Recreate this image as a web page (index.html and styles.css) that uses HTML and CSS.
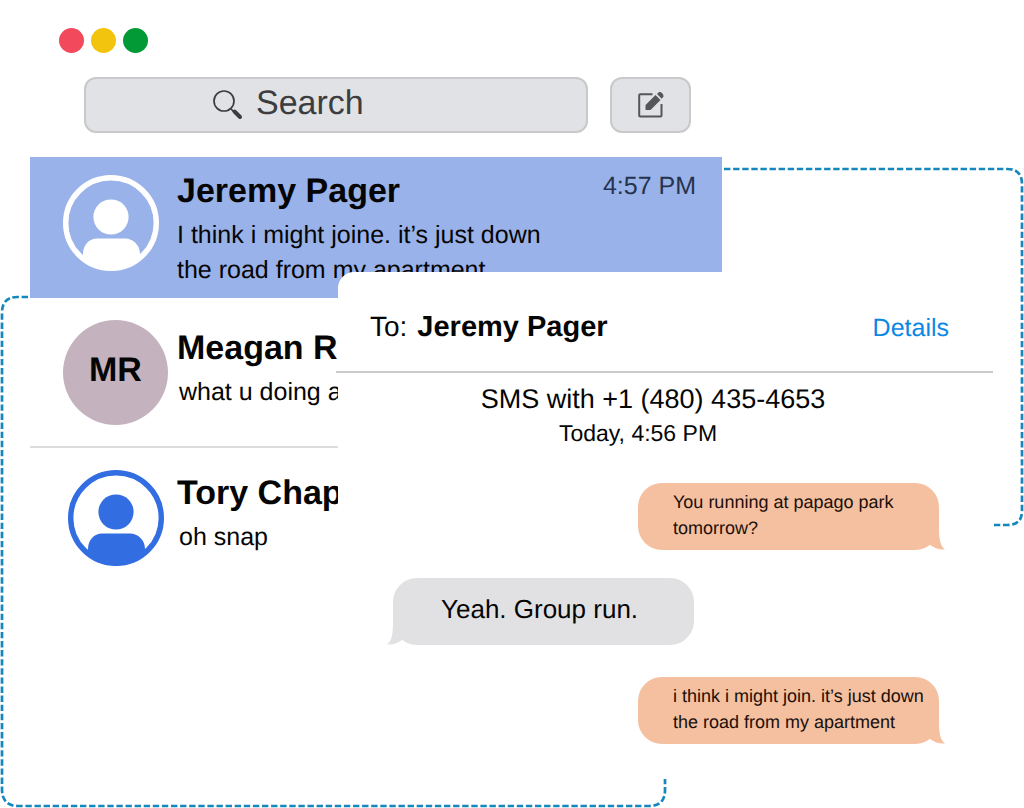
FILE: index.html
```html
<!DOCTYPE html>
<html lang="en">
<head>
<meta charset="utf-8">
<title>Messages</title>
<meta name="viewport" content="width=device-width, initial-scale=1">
<link rel="stylesheet" href="styles.css">
</head>
<body>
<svg class="symbols" aria-hidden="true">
  <symbol id="person" viewBox="0 0 96 96">
    <circle cx="48" cy="48" r="45.3" fill="none" stroke="currentColor" stroke-width="5.4"/>
    <circle cx="48" cy="42" r="17.6" fill="currentColor"/>
    <path fill="currentColor" d="M20 84V79C20 70 26 63.500 34 63.500H62C70 63.500 77 70 77 79V84C69 91 59 95.500 48 95.500S27 91 20 84Z"/>
  </symbol>
  <symbol id="tail" viewBox="0 0 22 34">
    <path fill="currentColor" d="M0 0H16V12C16 22 17 30 22 33.500C16 34 11 32 7 29L0 20Z"/>
  </symbol>
</svg>
<main class="scene">
  <svg class="frame frame-right" width="301" height="361" aria-hidden="true">
    <path d="M1 2H284Q299 2 299 17V344Q299 358 284 358H271"/>
  </svg>
  <svg class="frame frame-left" width="668" height="513" aria-hidden="true">
    <path d="M28 2H17Q2 2 2 18V494Q2 511 18 511H649Q665 511 665 495V484"/>
  </svg>

  <section class="inbox" aria-label="Conversations">
    <div class="dots"><span class="dot red"></span><span class="dot yellow"></span><span class="dot green"></span></div>
    <div class="toolbar">
      <label class="search">
        <svg width="32" height="32" viewBox="0 0 32 32" aria-hidden="true">
          <circle cx="12" cy="12" r="10" fill="none" stroke="currentColor" stroke-width="1.700"/>
          <path d="M19 20L22 23" stroke="currentColor" stroke-width="1.700"/>
          <path d="M22.500 22.500L28 28" stroke="currentColor" stroke-width="4" stroke-linecap="round"/>
        </svg>
        <input type="search" placeholder="Search" aria-label="Search">
      </label>
      <button class="compose" type="button" aria-label="New message">
        <svg width="28" height="28" viewBox="0 0 28 28" aria-hidden="true">
          <path d="M15.500 3.200H3.200Q2.200 3.200 2.200 4.200V24.500Q2.200 25.500 3.200 25.500H23.500Q24.500 25.500 24.500 24.500V13" fill="none" stroke="currentColor" stroke-width="2"/>
          <path fill="currentColor" d="M8.500 14L18.500 4L23.500 9L13.500 19H8.500ZM20 3L21.500 1.500C23.500 -0.500 28 4 26 6.300L24.700 7.700Z"/>
        </svg>
      </button>
    </div>
    <ul class="threads">
      <li class="thread selected">
        <svg class="avatar" width="96" height="96" aria-hidden="true"><use href="#person"/></svg>
        <div class="text"><h2>Jeremy Pager</h2><p>I think i might joine. it’s just down<br>the road from my apartment</p></div>
        <time>4:57 PM</time>
      </li>
      <li class="thread second">
        <span class="initials">MR</span>
        <div class="text"><h2>Meagan R</h2><p>what u doing a</p></div>
      </li>
      <li class="thread third">
        <svg class="avatar" width="96" height="96" aria-hidden="true"><use href="#person"/></svg>
        <div class="text"><h2>Tory Chap</h2><p>oh snap</p></div>
      </li>
    </ul>
  </section>

  <section class="chat" aria-label="Conversation with Jeremy Pager">
    <header class="chat-head">
      <span class="to">To:</span>
      <strong>Jeremy Pager</strong>
      <a href="#details">Details</a>
    </header>
    <p class="number">SMS with +1 (480) 435-4653</p>
    <p class="date">Today, 4:56 PM</p>
    <div class="messages">
      <p class="bubble sent">You running at papago park<br>tomorrow?<svg class="tail" width="22" height="34" aria-hidden="true"><use href="#tail"/></svg></p>
      <p class="bubble received">Yeah. Group run.<svg class="tail" width="22" height="34" aria-hidden="true"><use href="#tail"/></svg></p>
      <p class="bubble sent">i think i might join. it’s just down<br>the road from my apartment<svg class="tail" width="22" height="34" aria-hidden="true"><use href="#tail"/></svg></p>
    </div>
  </section>
</main>
</body>
</html>
```
FILE: styles.css
```css
* { box-sizing: border-box; }
body, h2, p, ul { margin: 0; }
body {
  background: #fff;
  color: #050505;
  font-family: "Liberation Sans", Arial, sans-serif;
  text-rendering: geometricPrecision;
}
.symbols { position: absolute; width: 0; height: 0; }

.scene {
  position: relative;
  display: grid;
  grid-template-columns: 30px 308fr 384fr 271fr 31px;
  align-items: start;
  min-height: 100vh;
}
.frame { position: absolute; fill: none; stroke: #1687bd; stroke-width: 2.7; stroke-dasharray: 6.4 2.7; }
.frame-right { top: 167px; right: 0; }
.frame-left { top: 295px; left: 0; }

.inbox { grid-area: 1 / 2 / 2 / 4; position: relative; padding-top: 28px; }
.dots { display: flex; gap: 7px; padding-left: 29px; }
.dot { width: 25px; height: 25px; border-radius: 50%; }
.red { background: #f2495c; }
.yellow { background: #f3c40d; }
.green { background: #029a36; }

.toolbar { display: flex; gap: 22px; padding: 24px 31px 24px 54px; }
.search, .compose {
  height: 56px;
  border: 2px solid #c9c9cb;
  border-radius: 12px;
  background: #e1e2e5;
}
.search { flex: 1; display: flex; align-items: center; gap: 12px; min-width: 0; padding: 0 0 3px 126px; color: #3c3d40; }
.search svg { flex: none; margin-top: 2px; }
.search input {
  flex: 1;
  min-width: 0;
  padding: 0;
  border: 0;
  outline: 0;
  background: none;
  color: inherit;
  font: 34px "Liberation Sans", Arial, sans-serif;
  text-rendering: inherit;
}
.search input::placeholder { color: inherit; opacity: 1; }
.compose { display: grid; place-items: center; width: 81px; padding: 0; color: #555659; }

.threads { padding: 0; list-style: none; }
.thread {
  display: grid;
  grid-template-columns: 105px 1fr auto;
  column-gap: 9px;
  align-items: start;
  padding: 22px 26px 21px 33px;
}
.thread h2 { font-size: 34px; line-height: 42px; }
.thread p { margin-top: 6px; font-size: 25px; line-height: 35px; }
.selected { padding-top: 13px; padding-bottom: 10px; background: #99b2e9; }
.selected .avatar { margin-top: 5px; color: #fff; }
.thread time { color: #26334d; font-size: 25px; line-height: 32px; }
.second { border-bottom: 2px solid #dcdcde; }
.second .text { padding-top: 7px; }
.second p, .third p { padding-left: 2px; }
.third .text { padding-top: 2px; }
.third .avatar { justify-self: center; color: #326de2; }
.initials {
  width: 105px;
  height: 105px;
  border-radius: 50%;
  background: #c4b3be;
  font-size: 34px;
  font-weight: bold;
  line-height: 100px;
  text-align: center;
}

.chat {
  grid-area: 1 / 3 / 2 / 5;
  position: relative;
  margin-top: 272px;
  border-top-left-radius: 16px;
  background: #fff;
}
.chat-head {
  display: flex;
  align-items: baseline;
  gap: 10px;
  margin-left: -2px;
  padding: 38px 44px 26px 34px;
  border-bottom: 2px solid #cbcbcd;
  line-height: 34px;
}
.to { font-size: 28px; }
.chat-head strong { font-size: 29px; }
.chat-head a { margin-left: auto; color: #0a88e4; font-size: 25px; text-decoration: none; }
.number, .date { text-align: center; }
.number { padding: 8px 25px 0 0; font-size: 27px; line-height: 36px; }
.date { padding-right: 55px; font-size: 23px; line-height: 33px; }

.messages { display: flex; flex-direction: column; gap: 28px; padding: 33px 54px 26px 55px; }
.bubble { position: relative; width: 301px; border-radius: 24px; }
.sent { align-self: flex-end; padding: 6px 0 9px 35px; background: #f4c09f; color: #1c0f0a; font-size: 18px; line-height: 26px; }
.received { margin-bottom: 4px; padding: 15px 0 20px 48px; background: #e1e1e3; font-size: 26px; line-height: 32px; }
.tail { position: absolute; right: -6px; bottom: 0; color: #f4c09f; }
.received .tail { right: auto; left: -6px; color: #e1e1e3; transform: scaleX(-1); }
```
